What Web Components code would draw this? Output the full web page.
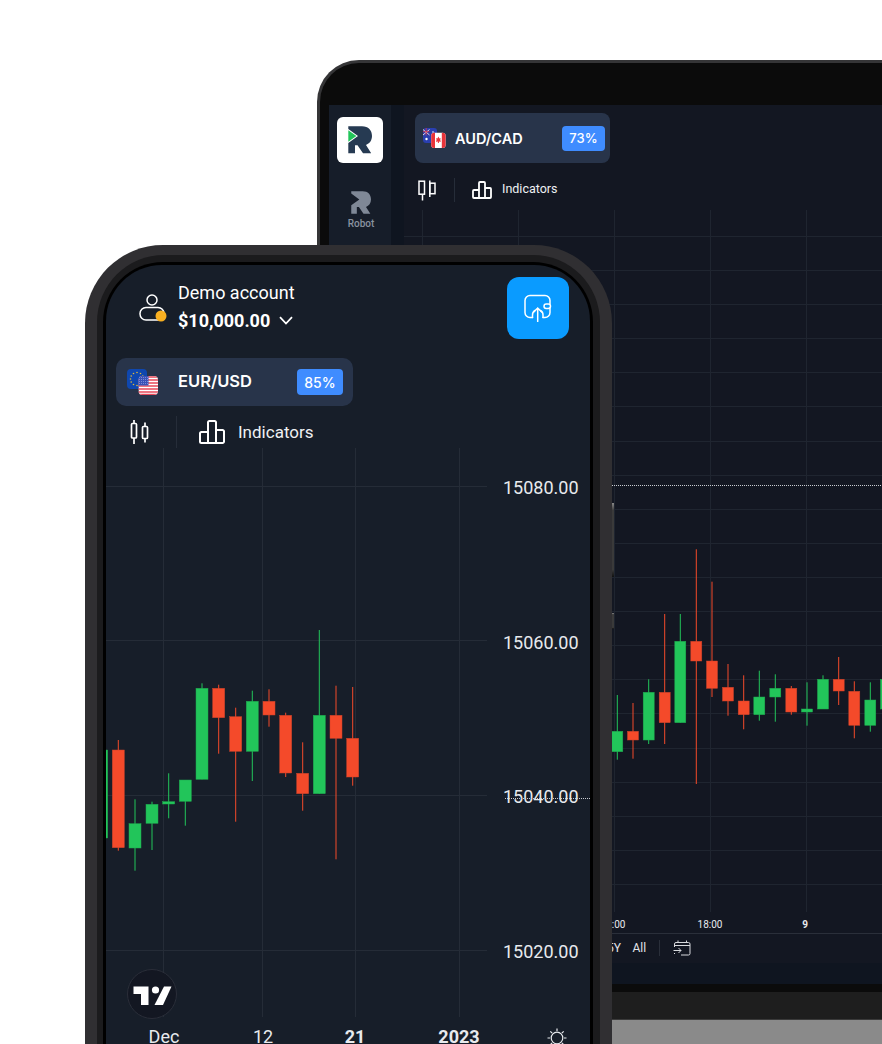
<!doctype html>
<html>
<head>
<meta charset="utf-8">
<title>Trading platform devices</title>
<style>
  html, body { margin: 0; background: #fff; overflow: hidden; }
  body { font-family: Roboto, "Liberation Sans", sans-serif; }
  #stage { position: relative; width: 882px; height: 1044px; overflow: hidden; }
</style>
</head>
<body>
<div id="stage">
  <laptop-mock></laptop-mock>
  <phone-mock></phone-mock>
</div>

<script>
// candles: [colour, centre x, wick top, wick bottom, body top, body bottom], page coordinates
const G = "g", R = "r";
const LAPTOP_CANDLES = [
  [G,617.3,695,759.7,731.3,751.7],[R,633,703,758.7,731.3,740],[G,648.7,679.3,744,692.3,740],
  [R,664.7,614,744,692.3,722.7],[G,680.3,614,722.7,641.3,722.7],[R,696.3,549.3,784,641.3,661],
  [R,712,581.7,697,661,688.3],[R,728,664,715.7,687.3,701],[R,743.7,675.3,729.3,701,714.7],
  [G,759.3,670.7,720.7,697,714.7],[G,775.3,674.3,721.7,688.3,697],[R,791.3,686,714.7,688.3,712],
  [G,807,682.3,725.7,709,712],[G,823,675.3,709,679.3,709],[R,838.7,657,705,679.3,691],
  [R,854.3,681.3,738.3,691.3,725.3],[G,870.3,682.3,731.7,700,725.3],[G,886,675,709,679.3,709]
];
const PHONE_CANDLES = [
  [G,101.700,750,838,750,838],[R,118.3,740,850.7,750,847.7],[G,135,799.3,870.7,823.7,848],
  [G,152,801.7,850,804.3,823.3],[G,168.7,773.3,818.3,801.7,804],[G,185.3,780,825.7,780,801.3],
  [G,202,683.3,779.3,688.3,779.3],[R,218.7,684.7,753.7,688.3,717.7],[R,235.7,707.7,821.7,716.7,751.3],
  [G,252.3,690.7,781,701.3,751.3],[R,269,689.3,726.7,701.3,715],[R,285.7,712.7,777,715.3,773],
  [R,302.7,742.3,810.7,773.3,793.7],[G,319.3,630,793.7,715.3,793.7],[R,336,685.7,859.3,715.3,738.3],
  [R,352.7,687,785.7,738.3,777]
];
const LAPTOP_ROWS = [236,270,304,338,372,406,441,475,509,543,577,611,645,679,713,748,782,816,850,884];

class CandleChart extends HTMLElement {
  constructor() {
    super();
    this.attachShadow({ mode: "open" });
  }
  // the owner calls this once its own markup is in place
  configure(c) {
    const [vx, vy, vw, vh] = c.view;
    let s = "";
    c.rows.forEach(y => s += `<line x1="${c.rowFrom}" x2="${c.rowTo}" y1="${y + .5}" y2="${y + .5}" stroke="${c.grid}"/>`);
    c.cols.forEach(x => s += `<line x1="${x + .5}" x2="${x + .5}" y1="${vy}" y2="${c.colTo}" stroke="${c.grid}"/>`);
    c.candles.forEach(([col, cx, wt, wb, bt, bb]) => {
      const fill = col == G ? "#22c55a" : "#f44a2a";
      const edge = col == G ? "#1fa84f" : "#c9422a";
      s += `<line x1="${cx}" x2="${cx}" y1="${wt}" y2="${wb}" stroke="${fill}" stroke-width="1"/>`;
      s += `<rect x="${cx - c.bw / 2}" y="${bt}" width="${c.bw}" height="${bb - bt}" fill="${fill}" stroke="${edge}" stroke-width=".5"/>`;
    });
    c.labels.forEach(l => {
      s += `<text x="${l.x}" y="${l.y}" text-anchor="${l.anchor || "middle"}" font-size="${l.size}" font-weight="${l.bold ? 700 : 400}" fill="${l.fill || "#e8eaee"}">${l.t}</text>`;
    });
    (c.dots || []).forEach(d => {
      s += `<line x1="${d[0]}" x2="${d[1]}" y1="${d[2]}" y2="${d[2]}" stroke="#c9ccd2" stroke-dasharray="1 1"/>`;
    });
    this.shadowRoot.innerHTML = `
      <style>
        :host { display: block; position: relative; width: ${vw}px; height: ${vh}px; flex: none; }
        svg { display: block; font-family: Roboto, "Liberation Sans", sans-serif; }
      </style>
      <svg width="${vw}" height="${vh}" viewBox="${vx} ${vy} ${vw} ${vh}">${s}</svg>
      <slot></slot>`;
  }
}
customElements.define("candle-chart", CandleChart);

class PairPill extends HTMLElement {
  constructor() {
    super();
    this.attachShadow({ mode: "open" });
    this.shadowRoot.innerHTML = `
      <style>
        :host {
          display: flex; align-items: center; box-sizing: border-box;
          width: var(--w); height: var(--h); padding: 0 var(--pad-r) 0 var(--pad-l);
          background: #28344a; border-radius: var(--radius);
          color: #fff; font-family: Inter, Roboto, sans-serif;
        }
        .name { margin: var(--name-top, 0) 0 0 var(--gap); font-size: var(--fs); font-weight: 600; }
        .pct {
          margin-left: auto; display: flex; align-items: center; justify-content: center;
          width: var(--bw); height: var(--bh); border-radius: 4px; background: #3f8cff;
          font-size: var(--bfs); font-weight: 500;
        }
        ::slotted(svg) { display: block; }
      </style>
      <slot></slot>
      <span class="name">${this.getAttribute("name")}</span>
      <span class="pct">${this.getAttribute("pct")}</span>`;
  }
}
customElements.define("pair-pill", PairPill);

class ToolBar extends HTMLElement {
  constructor() {
    super();
    this.attachShadow({ mode: "open" });
    this.shadowRoot.innerHTML = `
      <style>
        :host {
          display: flex; align-items: center; height: var(--h); padding-left: var(--pad);
          color: #eef0f3; font: 400 var(--fs) Roboto, sans-serif;
        }
        .sep { width: 1px; align-self: stretch; background: #262d39; margin: 0 var(--after) 0 var(--before); }
        .txt { margin: var(--txt-top, 0) 0 0 var(--gap); }
        ::slotted(svg) { display: block; }
      </style>
      <slot name="candle"></slot>
      <span class="sep"></span>
      <slot name="bars"></slot>
      <span class="txt">Indicators</span>`;
  }
}
customElements.define("tool-bar", ToolBar);

const R_PATH = "M11.3 9.3H25C31.5 9.3 35 13.5 35 19C35 23.5 32.5 26.5 29 28L34.2 36.3H26L20.5 28.2H18V36.3H11.3V26L21 19L11.3 12Z";

class LaptopMock extends HTMLElement {
  constructor() {
    super();
    this.attachShadow({ mode: "open" });
    this.shadowRoot.innerHTML = `
      <style>
        :host { position: absolute; left: 317px; top: 60px; width: 700px; height: 1100px; display: block; }
        .lid {
          box-sizing: border-box; height: 932px; padding: 42px 0 8px 9px;
          background: #0b0b0b; border: 3px solid #353537; border-bottom: 0; border-radius: 42px 42px 0 0;
        }
        .screen { display: flex; height: 879px; background: #131722; }
        .rail {
          width: 62px; flex: none; background: #161d29; display: flex; flex-direction: column;
          align-items: center; padding-top: 12px; box-sizing: border-box;
        }
        .logo { width: 46px; height: 46px; background: #fff; border-radius: 6px; display: block; }
        .robot { margin: 28px 0 0 2px; display: flex; flex-direction: column; align-items: center; gap: 4px;
          color: #8a93a0; font: 500 10px Roboto, sans-serif; }
        .strip { width: 13px; flex: none; background: #0f1520; }
        .main { flex: 1; display: flex; flex-direction: column; min-width: 0; }
        pair-pill { margin: 8px 0 0 11px; flex: none;
          --w: 195px; --h: 50px; --pad-l: 8px; --pad-r: 5px; --radius: 8px; --gap: 9px; --fs: 14.5px; --bw: 43px; --bh: 25px; --bfs: 13px; --name-top: 0; }
        tool-bar { margin-top: 15px; flex: none;
          --h: 24px; --pad: 14px; --before: 18px; --after: 17px; --gap: 10px; --fs: 12.5px; --txt-top: -4px; }
        .axis {
          box-sizing: border-box; height: 30px; border-top: 1px solid #2a2f3a; display: flex; align-items: center;
          padding: 0 0 2px 203px; color: #e2e4e8; font: 400 12px Roboto, sans-serif; flex: none;
        }
        .axis b { font-weight: 400; margin-right: 11.500px; }
        .axis i { width: 1px; height: 16px; background: #2a2f3a; margin: 0 13px 0 1px; }
        .foot { height: 21px; background: #0f1520; flex: none; }
        .base { height: 27px; background: #1e1e1e; border-bottom: 1px solid #3a3a3a; }
        .metal { height: 100px; background: #8a8a8a; }
      </style>
      <div class="lid">
        <div class="screen">
          <div class="rail">
            <svg class="logo" viewBox="0 0 46 46">
              <path d="${R_PATH}" fill="#263a52"/>
              <path d="M11.3 13.2V24.8L19.4 19Z" fill="#22c55a"/>
            </svg>
            <div class="robot">
              <svg width="20" height="23" viewBox="11 9 24 27.5"><path d="${R_PATH}" fill="#7f8896"/></svg>
              <span>Robot</span>
            </div>
          </div>
          <div class="strip"></div>
          <div class="main">
            <pair-pill name="AUD/CAD" pct="73%">
              <svg width="23" height="20" viewBox="0 0 23 20">
                <rect x="0" y="0" width="14" height="15" rx="3" fill="#2a3fb0"/>
                <path d="M0 1.5L6.5 7M6.5 1.5L0 7" stroke="#e8d4dc" stroke-width="1"/>
                <path d="M3.2 0V7.5M0 3.7H6.5" stroke="#d8344a" stroke-width=".8"/>
                <circle cx="3.5" cy="11" r="1.2" fill="#fff"/><circle cx="10" cy="4" r=".8" fill="#fff"/><circle cx="10" cy="10" r=".8" fill="#fff"/>
                <rect x="8.2" y="4.8" width="14.4" height="15.2" rx="3" fill="#fff"/>
                <path d="M8.2 7.8a3 3 0 0 1 3-3h.8V20h-.8a3 3 0 0 1-3-3ZM18.8 4.8h.8a3 3 0 0 1 3 3V17a3 3 0 0 1-3 3H18.8Z" fill="#e8333a"/>
                <path d="M15.4 8.500l1 2 1.200-.4-.5 2.600.8-.2-.2 1.200-1.800-.3v1.600h-1v-1.600l-1.800.3-.2-1.200.8.2-.5-2.600 1.200.4Z" fill="#e8333a"/>
              </svg>
            </pair-pill>
            <tool-bar>
              <svg slot="candle" width="18" height="21" viewBox="0 0 18 21" fill="none" stroke="#fff" stroke-width="1.500">
                <rect x="1" y="1.200" width="5.500" height="13"/><path d="M4.500 14.500V20.500"/>
                <path d="M11.800 .500V17"/><rect x="11.800" y="3.200" width="5.200" height="10.500"/>
              </svg>
              <svg slot="bars" width="20" height="18" viewBox="0 0 20 18" fill="none" stroke="#fff" stroke-width="1.800" stroke-linejoin="round">
                <path d="M7 9H2a1 1 0 0 0-1 1V16a1 1 0 0 0 1 1H18a1 1 0 0 0 1-1V8a1 1 0 0 0-1-1H13"/>
                <path d="M7 17V2a1 1 0 0 1 1-1h4a1 1 0 0 1 1 1V17"/>
              </svg>
            </tool-bar>
            <div style="height:8px;flex:none"></div>
            <candle-chart id="chart"></candle-chart>
            <div class="axis">
              <b>5Y</b><b>All</b><i></i>
              <svg width="18" height="16" viewBox="0 0 18 16" fill="none" stroke="#d8dade" stroke-width="1">
                <path d="M1.500 7V4a1.500 1.500 0 0 1 1.500-1.500H15.500A1.500 1.500 0 0 1 17 4V13.500a1.500 1.500 0 0 1-1.500 1.500H8M1.500 5.500H17M5 .500V3M13.500 .500V3"/>
                <path d="M.500 10.500H8M5.500 8L8 10.500L5.500 13M1.500 13V14"/>
              </svg>
            </div>
            <div class="foot"></div>
          </div>
        </div>
      </div>
      <div class="base"></div>
      <div class="metal"></div>`;
    const cols = [422, 518, 614, 710, 806];
    this.shadowRoot.getElementById("chart").configure({
      view: [404, 210, 478, 723], rows: LAPTOP_ROWS, cols,
      rowFrom: 404, rowTo: 882, colTo: 912, grid: "#1f2530", candles: LAPTOP_CANDLES, bw: 11,
      labels: [
        { x: 613, y: 928, t: "12:00", size: 10 },
        { x: 710, y: 928, t: "18:00", size: 10 },
        { x: 805, y: 928, t: "9", size: 10, bold: true }
      ],
      dots: [[404, 882, 485.5]]
    });
  }
}
customElements.define("laptop-mock", LaptopMock);

class AccountHead extends HTMLElement {
  constructor() {
    super();
    this.attachShadow({ mode: "open" });
    this.shadowRoot.innerHTML = `
      <style>
        :host { display: flex; align-items: center; gap: 11px; color: #fff; font-family: Roboto, sans-serif; }
        svg { display: block; }
        .txt { margin-top: -3px; font-size: 18px; line-height: 27px; }
        .acc { margin: -1px 0 1px; }
        .bal { display: flex; align-items: center; gap: 9px; font-weight: 700; }
      </style>
      <svg width="28" height="30" viewBox="0 0 28 30" fill="none" stroke="#fff" stroke-width="1.500">
        <circle cx="13" cy="7" r="5"/>
        <path d="M7 14.500H19a6 6 0 0 1 6 6v.5a6 6 0 0 1-6 6H7a6 6 0 0 1-6-6v-.5a6 6 0 0 1 6-6Z" />
        <circle cx="22" cy="23" r="5.500" fill="#f9b021" stroke="none"/>
      </svg>
      <div class="txt">
        <div class="acc">Demo account</div>
        <div class="bal">$10,000.00
          <svg width="14" height="9" viewBox="0 0 14 9" fill="none" stroke="#fff" stroke-width="1.800"><path d="M1 1.200L7 7.500L13 1.200"/></svg>
        </div>
      </div>`;
  }
}
customElements.define("account-head", AccountHead);

class PhoneMock extends HTMLElement {
  constructor() {
    super();
    this.attachShadow({ mode: "open" });
    this.shadowRoot.innerHTML = `
      <style>
        :host { position: absolute; left: 85px; top: 245px; width: 527px; height: 900px; display: block; }
        .shell { box-sizing: border-box; height: 100%; padding: 10px 12px 0; background: #302f32; border-radius: 78px 78px 0 0; }
        .mid { box-sizing: border-box; height: 100%; padding: 7px 7px 0 6px; background: #1b1b1d; border-radius: 67px 67px 0 0; }
        .black { box-sizing: border-box; height: 100%; padding: 3px 3px 0; background: #000; border-radius: 60px 60px 0 0; }
        .screen { height: 100%; background: #171e29; border-radius: 56px 56px 0 0; overflow: hidden; display: flex; flex-direction: column; }
        .head { display: flex; align-items: center; justify-content: space-between; padding: 12px 21px 0 33px; }
        .up {
          width: 62px; height: 62px; border-radius: 12px; background: #0a9bff;
          display: flex; align-items: center; justify-content: center;
        }
        pair-pill { margin: 19px 0 0 10px; flex: none;
          --w: 237px; --h: 48px; --pad-l: 11px; --pad-r: 10px; --radius: 10px; --gap: 20px; --fs: 16.500px; --bw: 46px; --bh: 26px; --bfs: 14px; --name-top: -2px; }
        tool-bar { margin-top: 10px; flex: none;
          --h: 32px; --pad: 24px; --before: 27px; --after: 22px; --gap: 13px; --fs: 17px; }
        .tv { position: absolute; left: 21px; top: 521px; display: block; }
        .sun { position: absolute; left: 439px; top: 578px; display: block; }
        .btn { position: absolute; left: 527px; width: 2px; background: linear-gradient(#8a8a8a, #3a3a3a 10%, #3a3a3a 90%, #111); }
      </style>
      <div class="shell"><div class="mid"><div class="black"><div class="screen">
        <div class="head">
          <account-head></account-head>
          <div class="up">
            <svg width="28" height="28" viewBox="0 0 28 28" fill="none" stroke="#fff" stroke-width="1.500" stroke-linecap="round">
              <path d="M8.500 23.500H6a5 5 0 0 1-5-5V6.500a5 5 0 0 1 5-5H21a5 5 0 0 1 5 5V10M26 14.500V18.500a5 5 0 0 1-5 5H19"/>
              <path d="M8.500 23.500V21a5 5 0 0 1 2.500-4.500M19 23.500V21a5 5 0 0 0-2.500-4.500"/>
              <rect x="20" y="10" width="6.500" height="4.500" rx="2.200"/>
              <path d="M13.700 27.500V14M9.700 18L13.700 14L17.700 18"/>
            </svg>
          </div>
        </div>
        <pair-pill name="EUR/USD" pct="85%">
          <svg width="31" height="26" viewBox="0 0 31 26">
            <rect x="0" y="0" width="20" height="20" rx="4" fill="#0f47af"/>
            <g fill="#e0b83a">
              <circle cx="10" cy="3.500" r=".8"/><circle cx="6.500" cy="4.500" r=".8"/><circle cx="4.200" cy="7" r=".8"/>
              <circle cx="3.500" cy="10" r=".8"/><circle cx="4.200" cy="13" r=".8"/><circle cx="6.500" cy="15.500" r=".8"/>
              <circle cx="10" cy="16.500" r=".8"/><circle cx="13.500" cy="4.500" r=".8"/><circle cx="15.800" cy="7" r=".8"/>
            </g>
            <clipPath id="us"><rect x="11.500" y="7" width="19.500" height="19" rx="4"/></clipPath>
            <g clip-path="url(#us)">
              <rect x="11.500" y="7" width="19.500" height="19" fill="#fff"/>
              <path d="M11 8H31M11 11H31M11 14H31M11 17H31M11 20H31M11 23H31M11 25.500H31" stroke="#e8485a" stroke-width="1.500"/>
              <rect x="11.500" y="7" width="10" height="9.500" fill="#3a52b8"/>
              <path d="M12 8.500H21M12 10.500H21M12 12.500H21M12 14.500H21" stroke="#8c9ae0" stroke-width=".8" stroke-dasharray="1 1"/>
            </g>
          </svg>
        </pair-pill>
        <tool-bar>
          <svg slot="candle" width="19" height="26" viewBox="0 0 19 26" fill="none" stroke="#fff" stroke-width="1.700">
            <rect x="1.500" y="4.500" width="5" height="14.500" rx="1"/><path d="M4 1V4.500M4 19V25"/>
            <rect x="12.500" y="7.500" width="5" height="12" rx="1"/><path d="M15 3.500V7.500M15 19.500V23.500"/>
          </svg>
          <svg slot="bars" width="26" height="24" viewBox="0 0 26 24" fill="none" stroke="#fff" stroke-width="2" stroke-linejoin="round">
            <path d="M9 12H2.500A1.500 1.500 0 0 0 1 13.500V21.500A1.500 1.500 0 0 0 2.500 23H23.500A1.500 1.500 0 0 0 25 21.500V11.500A1.500 1.500 0 0 0 23.500 10H17"/>
            <path d="M9 23V2.500A1.500 1.500 0 0 1 10.500 1H15.500A1.500 1.500 0 0 1 17 2.500V23"/>
          </svg>
        </tool-bar>
        <candle-chart id="chart">
          <svg class="tv" width="50" height="50" viewBox="0 0 50 50">
            <circle cx="25" cy="25" r="24.500" fill="#131722" stroke="#2a2e39"/>
            <path d="M6.500 17.500H21.500V36H14V25H6.500Z" fill="#fff"/>
            <circle cx="28.500" cy="21" r="3.600" fill="#fff"/>
            <path d="M37 17.500H44.500L36 36H27.500Z" fill="#fff"/>
          </svg>
          <svg class="sun" width="24" height="24" viewBox="0 0 24 24" fill="none" stroke="#e8eaee" stroke-width="1.200">
            <circle cx="12" cy="12" r="5.800"/>
            <path d="M12 2.500V5M12 19V21.500M2.500 12H5M19 12H21.500M5.300 5.300L7.200 7.200M16.800 16.800L18.700 18.700M18.700 5.300L16.800 7.200M7.200 16.800L5.300 18.700"/>
          </svg>
        </candle-chart>
      </div></div></div></div>
      <div class="btn" style="top:258px;height:74px"></div>
      <div class="btn" style="top:368px;height:16px"></div>`;
    const s = 18;
    this.shadowRoot.getElementById("chart").configure({
      view: [106, 448, 484, 600], rows: [486, 640, 795, 950], cols: [163, 262, 355, 459],
      rowFrom: 106, rowTo: 487, colTo: 1017, grid: "#252c37", candles: PHONE_CANDLES, bw: 12,
      labels: [
        { x: 503, y: 494, t: "15080.00", size: s, anchor: "start" },
        { x: 503, y: 649, t: "15060.00", size: s, anchor: "start" },
        { x: 503, y: 803, t: "15040.00", size: s, anchor: "start" },
        { x: 503, y: 958, t: "15020.00", size: s, anchor: "start" },
        { x: 164, y: 1043, t: "Dec", size: s },
        { x: 263, y: 1043, t: "12", size: s },
        { x: 355, y: 1043, t: "21", size: s, bold: true },
        { x: 459, y: 1043, t: "2023", size: s, bold: true }
      ],
      dots: [[505, 590, 798.5]]
    });
  }
}
customElements.define("phone-mock", PhoneMock);
</script>
</body>
</html>
